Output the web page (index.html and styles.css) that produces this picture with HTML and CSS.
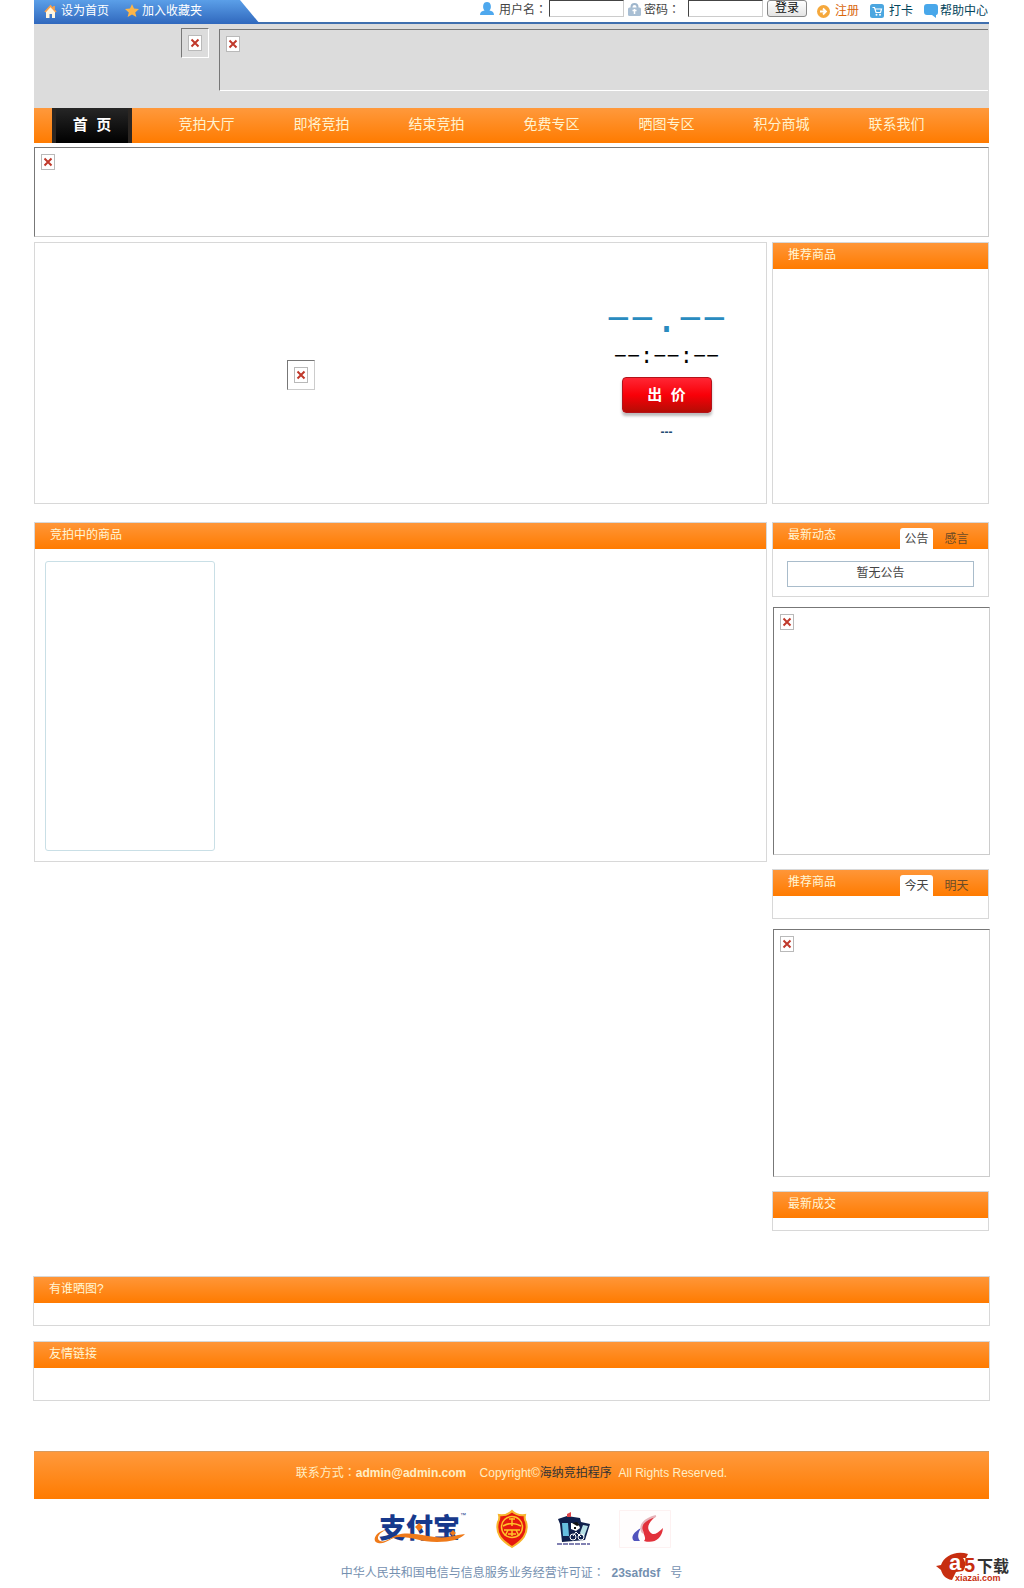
FILE: index.html
```
<!DOCTYPE html>
<html lang="zh-CN">
<head>
  <meta charset="UTF-8" />
  <meta name="viewport" content="width=device-width, initial-scale=1.0" />
  <title>海纳竞拍程序</title>
  <link rel="stylesheet" href="styles.css">
</head>
<body>
  <!-- shared placeholder for pictures that are missing -->
  <svg class="defs" width="0" height="0">
    <symbol id="no-image" viewBox="0 0 14 16">
      <rect x="0.5" y="0.5" width="13" height="15" fill="#fff" stroke="#b9b9b9"/>
      <path d="M3.500 4.500l7 7M10.500 4.500l-7 7" stroke="#c0392b" stroke-width="2"/>
    </symbol>
  </svg>

  <div class="page">
    <div class="topbar">
      <div class="quick">
        <a href="#">
          <svg width="13" height="14" viewBox="0 0 13 14"><path d="M2 7v7h3.500v-4h2.500v4h3V7L6.500 2.500z" fill="#fff6e0"/><path d="M1 8l5.500-6L12 8M10 2v3" fill="none" stroke="#f7a04b" stroke-width="1.800"/></svg>
          设为首页</a>
        <a href="#">
          <svg width="14" height="14" viewBox="0 0 14 14"><path d="M7 0l2 4.600 5 .5-3.800 3.300L11.400 13 7 10.500 2.600 13l1.200-4.600L0 5.100l5-.5z" fill="#fdb548"/></svg>
          加入收藏夹</a>
      </div>
      <form class="login">
        <label for="user">
          <svg width="14" height="14" viewBox="0 0 14 14"><path d="M0 13c0-3 2-4 4.500-4.500C3 7 3 5 3.200 3.500 3.500 1 5 0 7 0s3.500 1 3.800 3.500C11 5 11 7 9.500 8.500 12 9 14 10 14 13z" fill="#4ea8ee"/></svg>
          <span>用户名<span class="colon" lang="zh-TW">：</span></span></label>
        <input type="text" id="user" name="user">
        <label for="pass" class="pass-label">
          <svg width="13" height="13" viewBox="0 0 13 13"><path d="M3.500 6V4a3 3 0 0 1 6 0v2" fill="none" stroke="#9fb6cc" stroke-width="2"/><rect y="4.500" width="13" height="8.500" rx="1.500" fill="#a9bfd4"/><path d="M6.500 6v5M4.500 7.500h4" stroke="#fff" stroke-width="1.500"/></svg>
          <span>密码<span class="colon" lang="zh-TW">：</span></span></label>
        <input type="password" id="pass" name="pass">
        <button type="submit">登录</button>
      </form>
      <div class="links">
        <a class="register" href="#">
          <svg width="13" height="13" viewBox="0 0 13 13"><circle cx="6.500" cy="6.500" r="6.500" fill="#f5a83c"/><path d="M3 6.500h5M6 3.500l3 3-3 3" fill="none" stroke="#fff" stroke-width="1.800"/></svg>
          注册</a>
        <a href="#">
          <svg width="14" height="14" viewBox="0 0 14 14"><rect width="14" height="14" rx="2.500" fill="#4ba6e0"/><path d="M2.500 3.500h2l1.500 5h4.500l1-3.500H5" fill="none" stroke="#fff" stroke-width="1.200"/><circle cx="6.500" cy="10.800" r="1" fill="#fff"/><circle cx="10" cy="10.800" r="1" fill="#fff"/></svg>
          打卡</a>
        <a class="help" href="#">
          <svg width="14" height="14" viewBox="0 0 14 14"><path d="M3 0h8q3 0 3 3v5q0 3-2 3v3l-4-3H3q-3 0-3-3V3q0-3 3-3z" fill="#48a7ea"/></svg>
          帮助中心</a>
      </div>
    </div>

    <header class="header">
      <div class="missing logo"><svg width="14" height="16"><use href="#no-image"/></svg></div>
      <div class="missing head-ad"><svg width="14" height="16"><use href="#no-image"/></svg></div>
    </header>

    <nav class="nav">
      <a class="home" href="#">首&nbsp; 页</a>
      <a href="#">竞拍大厅</a>
      <a href="#">即将竞拍</a>
      <a href="#">结束竞拍</a>
      <a href="#">免费专区</a>
      <a href="#">晒图专区</a>
      <a href="#">积分商城</a>
      <a href="#">联系我们</a>
    </nav>

    <div class="missing banner"><svg width="14" height="16"><use href="#no-image"/></svg></div>

    <div class="columns top">
      <section class="featured">
        <div class="photo">
          <div class="missing"><svg width="14" height="16"><use href="#no-image"/></svg></div>
        </div>
        <div class="bid">
          <div class="price">−−.−−</div>
          <div class="timer">−−:−−:−−</div>
          <button type="button">出&nbsp; 价</button>
          <div class="bidder">---</div>
        </div>
      </section>
      <section class="panel">
        <h2>推荐商品</h2>
      </section>
    </div>

    <div class="columns">
      <section class="panel auctions">
        <h2>竞拍中的商品</h2>
        <div class="item"></div>
      </section>
      <aside class="side">
        <section class="panel news">
          <div class="panel-head">
            <h2>最新动态</h2>
            <div class="tabs">
              <button type="button" class="on">公告</button>
              <button type="button">感言</button>
            </div>
          </div>
          <p class="notice">暂无公告</p>
        </section>
        <div class="missing side-ad"><svg width="14" height="16"><use href="#no-image"/></svg></div>
        <section class="panel days">
          <div class="panel-head">
            <h2>推荐商品</h2>
            <div class="tabs">
              <button type="button" class="on">今天</button>
              <button type="button">明天</button>
            </div>
          </div>
        </section>
        <div class="missing side-ad"><svg width="14" height="16"><use href="#no-image"/></svg></div>
        <section class="panel deals">
          <h2>最新成交</h2>
        </section>
      </aside>
    </div>

    <section class="panel wide shows">
      <h2>有谁晒图?</h2>
    </section>
    <section class="panel wide friends">
      <h2>友情链接</h2>
    </section>

    <footer>
      <p class="copyright">联系方式<span class="colon" lang="zh-TW">：</span><b>admin@admin.com</b>&nbsp;&nbsp;&nbsp; Copyright©<a href="#">海纳竞拍程序</a>&nbsp; All Rights Reserved.</p>
      <div class="badges">
        <svg width="94" height="36" viewBox="0 0 94 36">
          <text x="6" y="27" class="alipay">支付宝</text>
          <path d="M13 19C3 20-2 30 5 32c8 2 12-6 21-6 14 0 22 5 38 5 14 0 24-3 28-8l-7 1c-10 3-20 3-30 1-12-2-22-4-31-1-7 3-12 8-17 6-5-3 0-9 6-11z" fill="#ef7a1a"/>
          <path d="M46 12l4 4-4 4-4-4zM80 19l3 3-3 3-3-3z" fill="#ef7a1a"/>
          <text x="87" y="6" class="tm">™</text>
        </svg>
        <svg width="34" height="38" viewBox="0 0 34 38">
          <path d="M17 1q5 5 13 4-1 4 1 7c3 12-4 19-14 25C7 31 0 24 3 12q2-3 1-7 8 1 13-4z" fill="#e5180e" stroke="#f8b52c" stroke-width="2"/>
          <circle cx="17" cy="17" r="10.500" fill="none" stroke="#ffc229" stroke-width="1.500"/>
          <path d="M17 8v8M14 9h6M8 16q9-5 18 0M9 20h16M13 20l-3 6M21 20l3 6M13 24h8M17 20v6" fill="none" stroke="#ffc229" stroke-width="1.500"/>
        </svg>
        <svg width="34" height="34" viewBox="0 0 34 34">
          <path d="M1 7l9-3 13 2 1 4 9 2-5 16-23 2-2-18z" fill="#10204c"/>
          <path d="M5 11h6l1 13H6z" fill="#66bfe0"/>
          <path d="M26 13l5 1-4 11-4-4z" fill="#b7e0e6"/>
          <path d="M14 11h7l2 5-4 3-5-2z" fill="#fff"/>
          <path d="M15 11l5-1 3 3-3 1zM17 15h2v2h-2z" fill="#111"/>
          <circle cx="16" cy="25" r="3" fill="none" stroke="#fff"/>
          <circle cx="24" cy="25" r="3" fill="none" stroke="#fff"/>
          <path d="M16 24l3-4 5 5" fill="none" stroke="#fff"/>
          <path d="M10 5V2l4-2v5z" fill="#e0464b"/>
          <path d="M0 32h33" stroke="#8181b2" stroke-width="2" stroke-dasharray="5 1"/>
        </svg>
        <svg width="52" height="38" viewBox="0 0 52 38">
          <path d="M0.500 0.500h51v37H.5z" fill="#fffdfd" stroke="#fdf1f1"/>
          <path d="M37 6C27 9 20 14 24 22c2 5 3 7 1 9 10 3 18-2 19-13-6 6-10 8-13 4-4-5-1-10 6-16z" fill="#e2313b"/>
          <path d="M22 18c-7 4-11 9-7 13h6c-3-4-2-8 1-13z" fill="#5254bd"/>
          <path d="M37 6C26 9 19 15 24 23" fill="none" stroke="#e6b4ba" stroke-width="2"/>
        </svg>
      </div>
      <p class="licence">中华人民共和国电信与信息服务业务经营许可证<span class="colon" lang="zh-TW">：</span>&nbsp; <b>23safdsf</b>&nbsp;&nbsp; 号</p>
    </footer>
  </div>

  <a class="a5" href="#" aria-label="a5下载">
    <svg width="76" height="32" viewBox="0 0 76 32">
      <path d="M0 14l5-1C8 4 20-2 32 2l-2 4h-3c3 4 3 9 0 13l-7 1-4 8C9 27 6 22 5 18z" fill="#c72e10"/>
      <text x="13" y="18" class="a5-a">a</text>
      <text x="28" y="20" class="a5-5">5</text>
      <text x="41" y="20" class="a5-cn">下载</text>
      <text x="19" y="29" class="a5-url">xiazai.com</text>
    </svg>
  </a>
</body>
</html>
```

FILE: styles.css
```
* {
  box-sizing: border-box;
}
body {
  margin: 0;
  background: #fff;
  color: #444;
  font: 12px/18px "Liberation Sans", "Noto Sans CJK SC", sans-serif;
}
a {
  color: inherit;
  text-decoration: none;
}
p, h2 {
  margin: 0;
}
button {
  font: inherit;
  color: inherit;
  cursor: pointer;
}
svg {
  display: block;
  flex: none;
  overflow: visible;
}
.defs {
  position: absolute;
}
/* this face centres the full-width colon */
.colon {
  font-family: "Noto Sans CJK TC", sans-serif;
}
.page {
  margin: 0 35px 0 34px;
}

/* top bar */
.topbar {
  display: flex;
  height: 24px;
  border-bottom: 2px solid #3f6fae;
}
.topbar a, .topbar label {
  display: flex;
  align-items: center;
  gap: 5px;
  white-space: nowrap;
}
.quick {
  display: flex;
  gap: 16px;
  width: 226px;
  height: 24px;
  padding: 0 0 2px 10px;
  color: #fff;
  background: linear-gradient(#5b9fe8, #3068bd);
  clip-path: polygon(0 0, 206px 0, 100% 100%, 0 100%);
}
.quick a {
  gap: 4px;
}
.quick a:last-child {
  gap: 3px;
}
.login {
  display: flex;
  align-items: flex-start;
  margin-left: auto;
}
.login label {
  height: 18px;
}
.login input {
  width: 75px;
  height: 17px;
  margin: 0 4px 0 2px;
  padding: 0 2px;
  border: 1px solid #ccc;
  border-top-color: #444;
  border-left-color: #444;
  background: #fff;
}
.login .pass-label {
  gap: 3px;
  margin-right: 6px;
}
.login button {
  width: 40px;
  height: 17px;
  padding: 0;
  border: 1px solid #888;
  border-radius: 3px;
  background: linear-gradient(#fff, #e4e4e4);
  color: #111;
  line-height: 15px;
}
.links {
  display: flex;
  gap: 11px;
  margin-left: 10px;
  padding-right: 1px;
  color: #03455c;
}
.links .register {
  color: #d9660b;
}
.links .help {
  gap: 2px;
}

/* missing picture box */
.missing {
  padding: 6px;
  border: 1px solid;
  border-color: #777 #ccc #ccc #777;
}
.header {
  display: flex;
  align-items: flex-start;
  gap: 10px;
  height: 84px;
  padding: 4px 1px 0 147px;
  background: #dcdcdc;
}
.header .missing {
  border-color: #777 #fff #fff #777;
}
.header .head-ad {
  flex: 1;
  height: 62px;
  margin-top: 1px;
  border-right: 0;
}

.nav {
  display: flex;
  height: 35px;
  padding-left: 18px;
  background: linear-gradient(#ff993c, #ff7b00);
  color: #fff3cf;
  font-size: 14px;
  line-height: 33px;
  text-align: center;
}
.nav a {
  width: 115px;
}
.nav .home {
  width: 80px;
  margin-right: 17px;
  border: solid #2b2622;
  border-width: 0 4px;
  background: linear-gradient(#262626, #000);
  color: #fff;
  font-size: 15px;
  font-weight: bold;
}
.banner {
  height: 90px;
  margin: 4px 0 5px;
}

/* main layout */
.columns {
  display: grid;
  grid-template-columns: minmax(0, 1fr) 217px;
  gap: 5px;
  align-items: start;
}
.top {
  align-items: stretch;
  min-height: 262px;
  margin-bottom: 18px;
}
.panel {
  border: 1px solid #d8d8d8;
}
.panel h2 {
  height: 26px;
  padding-left: 15px;
  background: linear-gradient(#ff9638, #ff7b00);
  color: #fff6d5;
  font-size: 12px;
  font-weight: normal;
  line-height: 24px;
}
.panel-head {
  display: flex;
  background: linear-gradient(#ff9638, #ff7b00);
}
.panel-head h2 {
  background: none;
}
.tabs {
  display: flex;
  align-items: flex-end;
  margin-left: auto;
  padding-right: 15px;
}
.tabs button {
  height: 21px;
  width: 33px;
  margin-left: 7px;
  padding: 0;
  border: 0;
  border-radius: 3px 3px 0 0;
  background: none;
  color: #6b4a26;
}
.tabs .on {
  background: #fff;
  color: #444;
}

.featured {
  display: grid;
  grid-template-columns: minmax(0, 1fr) 199px;
  align-items: center;
  border: 1px solid #d8d8d8;
}
.photo {
  display: flex;
  justify-content: center;
  padding-top: 4px;
}
.bid {
  display: flex;
  flex-direction: column;
  align-items: center;
  font-family: "Liberation Mono", monospace;
}
.price {
  color: #2a8bbf;
  font-size: 40px;
  line-height: 46px;
}
.timer {
  color: #000;
  font-size: 22px;
  line-height: 26px;
}
.bid button {
  width: 90px;
  height: 36px;
  margin: 6px 0 10px;
  border: 1px solid #b3131a;
  border-radius: 4px;
  background: linear-gradient(#ff2634, #f90008 50%, #b40d05);
  box-shadow: 0 3px 3px #bbb;
  color: #fff;
  font: bold 15px/30px "Liberation Sans", "Noto Sans CJK SC", sans-serif;
}
.bidder {
  padding-bottom: 6px;
  color: #1f4e74;
  font: bold 12px/18px "Liberation Sans", sans-serif;
}

.auctions {
  min-height: 340px;
}
.item {
  width: 170px;
  height: 290px;
  margin: 12px 0 10px 10px;
  border: 1px solid #c9dfe6;
  border-radius: 3px;
}
.side-ad {
  height: 248px;
  margin: 10px -1px 14px 1px;
}
.news {
  height: 75px;
}
.notice {
  margin: 12px 14px;
  height: 26px;
  border: 1px solid #a9bccb;
  line-height: 22px;
  text-align: center;
}
.days {
  height: 50px;
}
.deals {
  height: 40px;
}
.wide {
  margin: 0 -1px;
}
.shows {
  min-height: 50px;
  margin-top: 45px;
}
.friends {
  min-height: 60px;
  margin-top: 15px;
}

/* footer */
footer {
  margin-top: 50px;
  text-align: center;
}
.copyright {
  height: 48px;
  border-top: 1px solid #d99a5c;
  background: linear-gradient(#ff993c, #ff7b00);
  color: #ffeec4;
  line-height: 40px;
}
.copyright a {
  color: #333;
}
.badges {
  display: flex;
  justify-content: center;
  align-items: center;
  gap: 28px;
  height: 60px;
  padding-left: 20px;
}
.licence {
  height: 29px;
  color: #7490b0;
  line-height: 26px;
}
.alipay {
  fill: #17398c;
  font: 900 27px "Noto Sans CJK SC", sans-serif;
}
.tm {
  fill: #17398c;
  font-size: 6px;
}
.a5 {
  position: absolute;
  top: 1552px;
  right: 12px;
}
.a5-a {
  fill: #fff;
  font: bold 22px "Liberation Sans", sans-serif;
}
.a5-5 {
  fill: #c72e10;
  font: bold 20px "Liberation Sans", sans-serif;
}
.a5-cn {
  fill: #333;
  font: bold 16px "Noto Sans CJK SC", sans-serif;
}
.a5-url {
  fill: #c72e10;
  font: bold 9px "Liberation Sans", sans-serif;
}
```
